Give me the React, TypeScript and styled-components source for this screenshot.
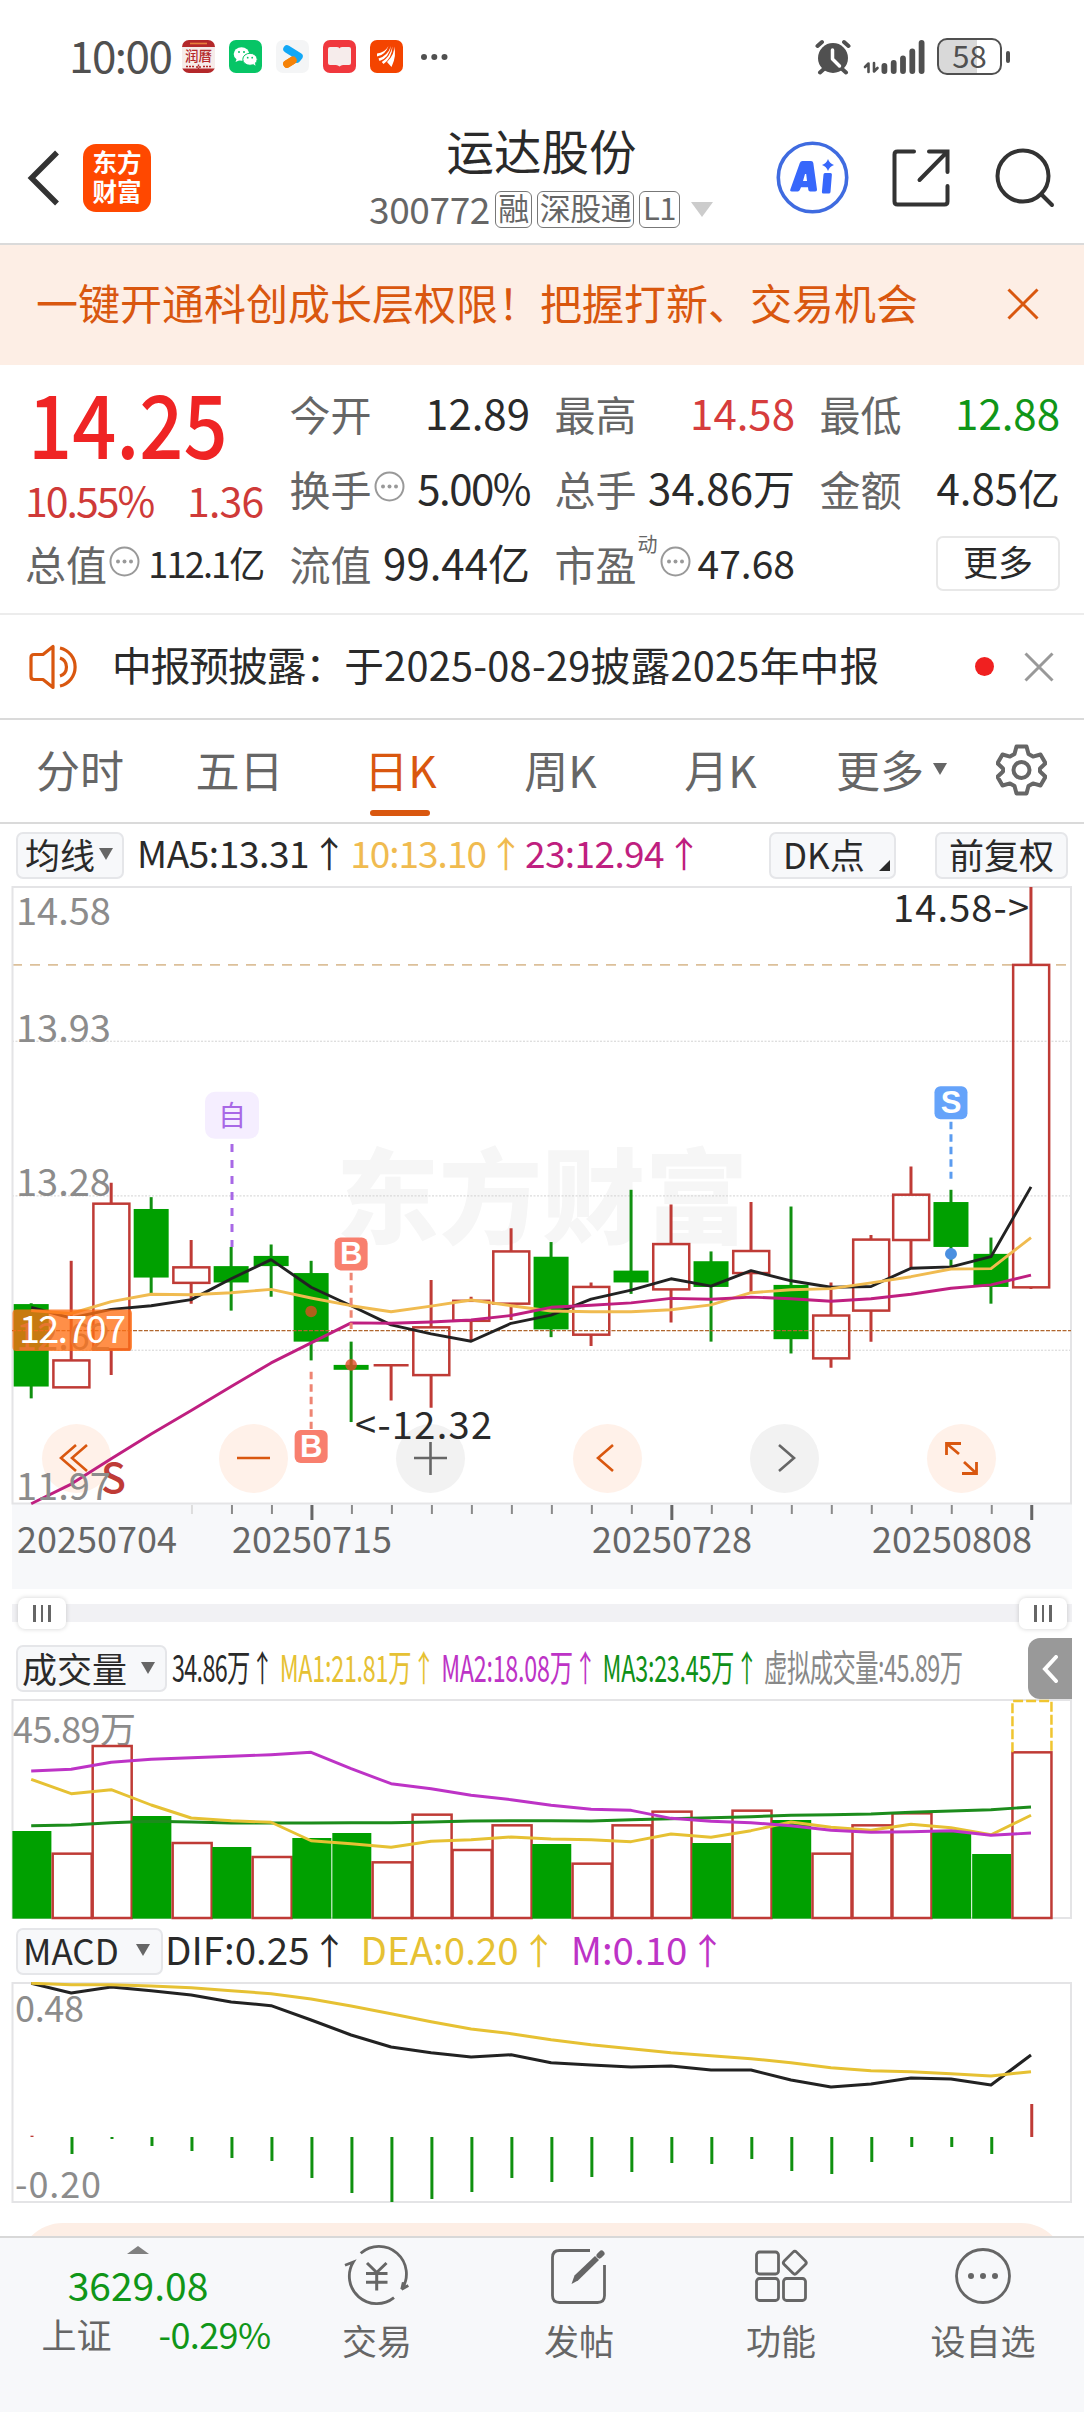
import React from "react";
import styled, { createGlobalStyle } from "styled-components";

const FONT = `"Noto Sans CJK SC", "Noto Sans", sans-serif`;

const C = {
  ink: "#2a2a2a",
  grey: "#666666",
  light: "#8c8c8c",
  orange: "#d9570f",
  peach: "#fdeee5",
  red: "#bf3b36",
  green: "#00a000",
  greenLine: "#109010",
  gold: "#f0bb50",
  yellow: "#e6c133",
  magenta: "#bf1f80",
  purple: "#bd33c6",
  frame: "#e4e4e6",
};

const Global = createGlobalStyle`
  html, body { margin: 0; padding: 0; background: #fff; }
  * { box-sizing: border-box; }
`;

const Page = styled.div`
  width: 1084px;
  height: 2412px;
  overflow: hidden;
  display: flex;
  flex-direction: column;
  background: #fff;
  font-family: ${FONT};
  color: ${C.ink};
  & > * { flex-shrink: 0; }
  svg { display: block; flex-shrink: 0; }
`;

const Text = styled.span<{ $size: number; $color?: string; $ls?: number; $weight?: number; $left?: number }>`
  font-size: ${(p) => p.$size}px;
  color: ${(p) => p.$color ?? C.ink};
  letter-spacing: ${(p) => p.$ls ?? 0}px;
  font-weight: ${(p) => p.$weight ?? 400};
  margin-left: ${(p) => p.$left ?? 0}px;
  line-height: 1.2;
  white-space: nowrap;
`;

const Caret = styled.i<{ $w: number; $h: number; $color: string; $left?: number }>`
  width: 0;
  height: 0;
  margin-left: ${(p) => p.$left ?? 0}px;
  border-left: ${(p) => p.$w / 2}px solid transparent;
  border-right: ${(p) => p.$w / 2}px solid transparent;
  border-top: ${(p) => p.$h}px solid ${(p) => p.$color};
`;

/* ---------- status bar ---------- */
const StatusBar = styled.div`
  height: 113px;
  padding: 0 74px 0 69px;
  display: flex;
  align-items: center;
  justify-content: space-between;
`;
const Row = styled.div<{ $gap?: number }>`
  display: flex;
  align-items: center;
  gap: ${(p) => p.$gap ?? 0}px;
`;
const Clock = styled.span`
  margin-top: -4px;
  font-size: 44px;
  line-height: 53px;
  letter-spacing: -1.5px;
  color: #505050;
`;
const AppIcons = styled.div`
  display: flex;
  align-items: center;
  gap: 14px;
  margin-left: 11px;
`;
const Battery = styled.div`
  width: 65px;
  height: 37px;
  margin-left: 12px;
  padding-bottom: 3px;
  border: 2.5px solid #505050;
  border-radius: 10px;
  display: flex;
  align-items: center;
  justify-content: center;
  background: linear-gradient(90deg, #d9d9d9 62%, #fff 62%);
`;
const BatteryNub = styled.i`
  width: 4px;
  height: 12px;
  border-radius: 2px;
  margin-left: 4px;
  background: #505050;
`;

const AlmanacIcon = () => (
  <svg width="33" height="33" viewBox="0 0 33 33">
    <rect width="33" height="33" rx="7" fill="#b4282a" />
    <rect y="7" width="33" height="21.5" fill="#f6ecea" />
    <path d="M8 3.5h17" stroke="#e8803c" strokeWidth="1.6" />
    <text x="16.5" y="21" fontSize="13.5" fontWeight="500" textAnchor="middle" fill="#b4282a">润曆</text>
    <path d="M4 26.5h8M21 26.5h8M14 27h5M16.5 24.5v5" stroke="#b4282a" strokeWidth="1.4" strokeDasharray="2 1" />
  </svg>
);
const WechatIcon = () => (
  <svg width="33" height="33" viewBox="0 0 33 33">
    <rect width="33" height="33" rx="7" fill="#07c566" />
    <ellipse cx="12.5" cy="14" rx="7.8" ry="6.8" fill="#fff" />
    <path d="M8 18l-1.5 4 4.500-2z" fill="#fff" />
    <ellipse cx="21" cy="19.300" rx="7.200" ry="6" fill="#fff" stroke="#07c566" strokeWidth="1" />
    <path d="M24 24l2.500 1.800-.6-3z" fill="#fff" />
    <g fill="#07c566">
      <circle cx="10" cy="12" r="1" /><circle cx="15" cy="12" r="1" />
      <circle cx="18.700" cy="17.700" r=".9" /><circle cx="23.200" cy="17.700" r=".9" />
    </g>
  </svg>
);
const VideoIcon = () => (
  <svg width="33" height="33" viewBox="0 0 33 33">
    <rect width="33" height="33" rx="7" fill="#f4f5f6" />
    <path d="M11 24L20.500 18" stroke="#f58208" strokeWidth="7.500" strokeLinecap="round" />
    <path d="M11 9L23 16.500L21 19" stroke="#12a8f6" strokeWidth="7.500" strokeLinecap="round" strokeLinejoin="round" fill="none" />
    <path d="M11 24L17 20.300" stroke="#f58208" strokeWidth="7.500" strokeLinecap="round" />
  </svg>
);
const ReaderIcon = () => (
  <svg width="33" height="33" viewBox="0 0 33 33">
    <rect width="33" height="33" rx="7" fill="#f0383e" />
    <path d="M5 9q0-2 2-2h7q2.500 0 2.500 1.500Q16.500 7 19 7h7q2 0 2 2v14q0 2-2 2h-6q-2 0-3.500 1.500Q15 25 13 25H7q-2 0-2-2z" fill="#f6eceb" />
  </svg>
);
const FanIcon = () => (
  <svg width="33" height="33" viewBox="0 0 33 33">
    <rect width="33" height="33" rx="7" fill="#f44400" />
    <g fill="#fff">
      <path d="M7 16.500q8-1 11.500-10.500-4 7-11.500 7.500z" />
      <path d="M9.500 21q9.500-3 11.500-15-3.500 10-12.500 12.500z" />
      <path d="M13.500 24Q22 18 22.500 6.500 20 17 11.800 22z" />
      <path d="M17 22Q25 14 24 6.500q3 9-2.500 20.500z" />
    </g>
  </svg>
);
const DotsSvg = styled.svg`
  margin-left: 3px;
`;
const MoreDots = () => (
  <DotsSvg width="28" height="8" viewBox="0 0 28 8">
    <g fill="#505050"><circle cx="4" cy="4" r="3" /><circle cx="14.300" cy="4" r="3" /><circle cx="24.500" cy="4" r="3" /></g>
  </DotsSvg>
);
const AlarmIcon = () => (
  <svg width="36" height="36" viewBox="0 0 36 36">
    <circle cx="18" cy="19" r="15" fill="#505050" />
    <path d="M2.500 7L7 3M33.500 7L29 3M5 33.500l5-4.500M31 33.500l-5-4.500" stroke="#505050" strokeWidth="4" strokeLinecap="round" />
    <path d="M17.500 11v9l7 7" stroke="#fff" strokeWidth="3.500" strokeLinecap="round" strokeLinejoin="round" fill="none" />
  </svg>
);
const SignalSvg = styled.svg`
  margin-left: 12px;
`;
const SignalIcon = () => (
  <SignalSvg width="62" height="36" viewBox="0 0 62 36">
    <path d="M5.500 33V24.500L2 28M11 24v8.500l3.500-3.500" stroke="#505050" strokeWidth="2.600" strokeLinecap="round" strokeLinejoin="round" fill="none" />
    <g fill="#505050">
      {[11, 14, 18.5, 25.5, 34].map((h, i) => (
        <rect key={i} x={18.5 + i * 9.3} y={35 - h} width="5.800" height={h} rx="2.900" />
      ))}
    </g>
  </SignalSvg>
);

/* ---------- header ---------- */
const Header = styled.div`
  height: 132px;
  padding: 0 29px 1px 27px;
  display: grid;
  grid-template-columns: 1fr auto 1fr;
  align-items: center;
  border-bottom: 2px solid #dadada;
`;
const Logo = styled.div`
  width: 68px;
  height: 68px;
  margin-left: 24px;
  border-radius: 13px;
  background: #ff4800;
  color: #fff;
  font-size: 24.5px;
  font-weight: 700;
  line-height: 29px;
  text-align: center;
  white-space: nowrap;
  padding: 3px 9px 0;
`;
const TitleBox = styled.div`
  display: flex;
  flex-direction: column;
  align-items: center;
  padding-bottom: 4px;
`;
const Title = styled.div`
  padding-left: 1px;
  font-size: 47.5px;
  line-height: 64px;
`;
const SubTitle = styled.div`
  display: flex;
  align-items: center;
  height: 48px;
  margin-top: 4px;
  & > span:first-child { margin-top: -3px; }
`;
const Tag = styled.span<{ $w: number }>`
  width: ${(p) => p.$w}px;
  height: 37px;
  margin-left: 5px;
  border: 1.5px solid #777;
  border-radius: 6px;
  color: ${C.grey};
  font-size: 31px;
  letter-spacing: -0.5px;
  line-height: 30px;
  text-align: center;
  white-space: nowrap;
`;
const HeaderActions = styled.div`
  display: flex;
  align-items: center;
  justify-content: flex-end;
  gap: 45px;
  & > svg:first-child { margin-right: -2px; }
`;

/* ---------- banner ---------- */
const Banner = styled.div`
  height: 120px;
  padding: 0 45px 2px 36px;
  background: ${C.peach};
  display: flex;
  align-items: center;
  justify-content: space-between;
  & > span { margin-top: -3px; }
`;
const Cross = ({ size, color, w }: { size: number; color: string; w: number }) => (
  <svg width={size} height={size} viewBox={`0 0 ${size} ${size}`}>
    <path d={`M1.500 1.500L${size - 1.5} ${size - 1.5}M${size - 1.5} 1.500L1.500 ${size - 1.5}`} stroke={color} strokeWidth={w} />
  </svg>
);

/* ---------- quote ---------- */
const Quote = styled.section`
  height: 250px;
  padding: 4px 26px 0 25px;
  display: flex;
  gap: 26px;
  border-bottom: 2px solid #ececec;
`;
const QuoteMain = styled.div`
  width: 239px;
  display: flex;
  flex-direction: column;
`;
const Price = styled.div`
  height: 103px;
  margin-left: 3px;
  padding-top: 2px;
  line-height: 100px;
  font-size: 88px;
  font-weight: 500;
  color: #ef2424;
  transform: scaleX(0.88);
  transform-origin: left;
`;
const ChangeRow = styled.div`
  height: 53px;
  padding-top: 2px;
  display: flex;
  align-items: center;
  justify-content: space-between;
`;
const QuoteGrid = styled.div`
  flex: 1;
  padding-top: 6px;
  display: grid;
  grid-template-columns: repeat(3, 238.5px);
  column-gap: 26.5px;
  grid-auto-rows: 75px;
  & span { margin-right: -2px; }
`;
const Cell = styled.div`
  height: 75px;
  display: flex;
  align-items: center;
  justify-content: space-between;
`;
const CellLabel = styled.div`
  display: flex;
  align-items: center;
  font-size: 41px;
  line-height: 50px;
  color: ${C.grey};
  white-space: nowrap;
`;
const Sup = styled.sup`
  font-size: 20px;
  line-height: 24px;
  align-self: flex-start;
  margin: -6px 0 0 1px;
`;
const MoreButton = styled.button`
  width: 124px;
  height: 55px;
  margin: 2px -2px 0 auto;
  padding: 0 0 6px;
  border: 2px solid #e8e8e8;
  border-radius: 7px;
  background: #fff;
  font: 400 35px ${FONT};
  color: ${C.ink};
  line-height: 44px;
`;
const InfoSvg = styled.svg<{ $left: number }>`
  margin: -3px 0 0 ${(p) => p.$left}px;
`;
const InfoDot = ({ left = 2 }: { left?: number }) => (
  <InfoSvg width="31" height="31" viewBox="0 0 31 31" $left={left}>
    <circle cx="15.500" cy="15.500" r="14" fill="none" stroke="#999" strokeWidth="2" />
    <g fill="#999"><circle cx="9" cy="15.500" r="2" /><circle cx="15.500" cy="15.500" r="2" /><circle cx="22" cy="15.500" r="2" /></g>
  </InfoSvg>
);

/* ---------- notice ---------- */
const Notice = styled.div`
  height: 105px;
  padding: 0 30px 0 29px;
  display: flex;
  align-items: center;
  border-bottom: 2px solid #dadada;
  & > span { margin-top: -6px; }
`;
const RedDot = styled.i`
  width: 19px;
  height: 19px;
  margin: 0 30px 0 auto;
  border-radius: 50%;
  background: #f02020;
`;

/* ---------- tabs ---------- */
const Tabs = styled.nav`
  height: 104px;
  padding: 0 36px;
  display: flex;
  border-bottom: 2px solid #dadada;
`;
const Tab = styled.div<{ $w: number; $active?: boolean }>`
  width: ${(p) => p.$w}px;
  height: 97px;
  display: flex;
  align-items: center;
  position: relative;
  font-size: 44px;
  line-height: 94px;
  color: ${(p) => (p.$active ? C.orange : C.grey)};
  &::after {
    content: "";
    display: ${(p) => (p.$active ? "block" : "none")};
    position: absolute;
    left: 6px;
    bottom: 1px;
    width: 60px;
    height: 6px;
    border-radius: 3px;
    background: ${C.orange};
  }
`;

/* ---------- indicator headers ---------- */
const IndicatorBar = styled.div<{ $h: number }>`
  height: ${(p) => p.$h}px;
  padding: 0 16px;
  display: flex;
  align-items: center;
`;
const Chip = styled.button<{ $w: number; $left?: string; $pad?: number }>`
  width: ${(p) => p.$w}px;
  height: 47px;
  margin: 0 0 0 ${(p) => p.$left ?? "0"};
  padding: 0 0 2px ${(p) => p.$pad ?? 7}px;
  display: flex;
  flex-shrink: 0;
  align-items: center;
  position: relative;
  border: 2px solid #e5e6e9;
  border-radius: 7px;
  background: #f7f8fa;
  font: 400 35px/40px ${FONT};
  color: ${C.ink};
  white-space: nowrap;
`;
const Corner = styled.i`
  position: absolute;
  right: 4px;
  bottom: 6px;
  border-left: 11px solid transparent;
  border-bottom: 11px solid ${C.ink};
`;
const Arrow = styled.span`
  display: inline-block;
  width: 36px;
  margin-left: 2px;
  text-align: center;
  font-size: 36px;
  letter-spacing: 0;
`;
const Reading = styled(Text)`
  margin-top: -5px;
`;
const Condensed = styled.div`
  display: flex;
  flex: none;
  width: 0;
  gap: 9.5px;
  margin-left: 5px;
  transform: scaleX(0.63);
  transform-origin: left;
`;
const CollapseTab = styled.div`
  width: 44px;
  height: 61px;
  margin: 0 -4px 0 auto;
  border-radius: 12px 0 0 12px;
  background: #999;
  display: flex;
  align-items: center;
  justify-content: center;
  flex-shrink: 0;
`;

const Value = ({ children, color, size = 37, ls = -0.4, left = 0 }: { children: string; color: string; size?: number; ls?: number; left?: number }) => (
  <Reading $size={size} $color={color} $ls={ls} $left={left}>{children}<Arrow>↑</Arrow></Reading>
);

/* ---------- K-line chart ---------- */
type Candle = [up: 0 | 1, high: number, top: number, bottom: number, low: number];
const candles: Candle[] = [
  [0, 1037, 1039, 1241, 1270], [1, 933, 1177, 1243, 1243], [1, 742, 793, 1150, 1213], [0, 777, 806, 974, 1012],
  [1, 882, 949, 987, 1038], [0, 899, 946, 986, 1055], [0, 893, 921, 946, 1021], [0, 933, 963, 1131, 1177],
  [0, 1131, 1188, 1200, 1328], [1, 1186, 1189, 1189, 1275], [1, 980, 1096, 1213, 1293], [1, 1021, 1031, 1080, 1130],
  [1, 853, 910, 1038, 1078], [0, 887, 923, 1101, 1120], [1, 986, 997, 1114, 1142], [0, 759, 957, 986, 1014],
  [1, 795, 892, 1003, 1084], [0, 910, 934, 997, 1131], [1, 789, 909, 963, 1010], [0, 800, 992, 1125, 1160],
  [1, 986, 1067, 1172, 1195], [1, 870, 881, 1055, 1131], [1, 702, 771, 882, 952], [0, 759, 789, 899, 952],
  [0, 876, 916, 997, 1038], [1, 17, 208, 998, 1002],
];
const ma5 = [1047, 1073, 1052, 1043, 1028, 977, 930, 998, 1043, 1090, 1112, 1130, 1086, 1066, 1027, 1005, 977, 995, 957, 982, 998, 996, 951, 948, 923, 752];
const ma10 = [1055, 1062, 1033, 1015, 1016, 1011, 1003, 1024, 1043, 1058, 1044, 1029, 1043, 1056, 1058, 1058, 1053, 1041, 1011, 1004, 1001, 987, 972, 953, 952, 876];
const ma23 = [1528, 1480, 1418, 1357, 1300, 1241, 1183, 1134, 1085, 1086, 1083, 1078, 1067, 1047, 1042, 1036, 1025, 1027, 1022, 1026, 1032, 1026, 1015, 1000, 992, 968];

const cx = (i: number) => 31.2 + 39.99 * i;
const ky = (v: number) => v / 2.45 - 6;
const line = (values: number[], y: (v: number) => number) => values.map((v, i) => `${cx(i).toFixed(1)},${y(v).toFixed(1)}`).join(" ");

const KWrap = styled.div`
  position: relative;
  height: 703px;
`;
const KSvg = styled.svg`
  position: relative;
  pointer-events: none;
`;
const ToolRow = styled.div`
  position: absolute;
  left: 42px;
  top: 538px;
  display: flex;
  gap: 108px;
`;
const Tool = styled.button<{ $grey?: boolean }>`
  width: 69px;
  height: 69px;
  padding: 0;
  border: 0;
  border-radius: 50%;
  display: flex;
  align-items: center;
  justify-content: center;
  color: ${(p) => (p.$grey ? C.grey : C.orange)};
  background: ${(p) => (p.$grey ? "#f2f2f2" : "#fff1e9")};
`;
const toolPaths = [
  { d: "M17 4L2 17l15 13M28 4L13 17l15 13", grey: false },
  { d: "M1 17h33", grey: false },
  { d: "M1 17h33M17.500 1v33", grey: true },
  { d: "M23 4L8 17l15 13", grey: false },
  { d: "M12 4l15 13-15 13", grey: true },
];

const Badge = ({ x, y, t, color }: { x: number; y: number; t: string; color: string }) => (
  <g>
    <rect x={x - 16.5} y={y - 16.5} width="33" height="33" rx="6" fill={color} />
    <text x={x} y={y + 10.5} fontSize="31" fontWeight="700" fill="#fff" textAnchor="middle" fontFamily="Liberation Sans, sans-serif">{t}</text>
  </g>
);

const KChart = () => (
  <KWrap>
    <ToolRow>
      {toolPaths.map((t, i) => (
        <Tool key={i} $grey={t.grey}>
          <svg width="35" height="35" viewBox="0 0 35 35" fill="none" stroke="currentColor" strokeWidth="2.600"><path d={t.d} /></svg>
        </Tool>
      ))}
      <Tool>
        <svg width="35" height="35" viewBox="0 0 35 35" fill="none" stroke="currentColor" strokeWidth="2.800">
          <path d="M2.500 14V2.500H17M2.500 2.500L15 13M32.500 21v11.500H18M32.500 32.500L20 21" />
        </svg>
      </Tool>
    </ToolRow>
    <KSvg width="1084" height="703" viewBox="0 0 1084 703">
      <rect x="12" y="618" width="1060" height="85" fill="#f7f8fa" />
      <text x="542" y="350" fontSize="103" fontWeight="900" fill="#f6f6f6" textAnchor="middle">东方财富</text>
      {[395, 774, 1152].map((v) => (
        <path key={v} d={`M12 ${ky(v)}H1071`} stroke="#d2d2d2" strokeDasharray="2 1.500" />
      ))}
      <path d={`M12 ${ky(208)}H1071`} stroke="#dcc09a" strokeWidth="1.600" strokeDasharray="10 8" />
      <rect x="12.500" y="1" width="1058.500" height="616.500" fill="none" stroke={C.frame} strokeWidth="2" />
      {candles.map(([up, h, t, b, l], i) => {
        const x = cx(i);
        const col = up ? C.red : C.greenLine;
        if (up)
          return (
            <g key={i} stroke={col} strokeWidth="2.500" fill="none">
              <path d={`M${x} ${ky(h)}V${ky(t)}M${x} ${ky(b)}V${ky(l)}`} strokeWidth="3" />
              {b - t < 2 ? <path d={`M${x - 17.5} ${ky(t)}h35`} /> : <rect x={x - 17.8} y={ky(t)} width="36" height={ky(b) - ky(t)} />}
            </g>
          );
        return (
          <g key={i}>
            <path d={`M${x} ${ky(h)}V${ky(l)}`} stroke={col} strokeWidth="3" />
            <rect x={x - 17.5} y={ky(t)} width="35" height={ky(b) - ky(t)} fill={C.green} />
          </g>
        );
      })}
      <path d={`M12 ${ky(1104)}H1071`} stroke="#b0662e" strokeWidth="1.200" strokeDasharray="4 1.500" />
      <g fill="none" strokeWidth="2.900" strokeLinejoin="round">
        <polyline points={line(ma5, ky)} stroke="#222" />
        <polyline points={line(ma10, ky)} stroke={C.gold} />
        <polyline points={line(ma23, ky)} stroke={C.magenta} />
      </g>
      <g fill="rgba(205,85,30,.85)">
        <circle cx={cx(7)} cy={ky(1057)} r="5.800" />
        <circle cx={cx(8)} cy={ky(1188)} r="5.800" fill="rgba(225,75,40,.8)" />
      </g>
      <circle cx={cx(23)} cy={ky(916)} r="6" fill="#4a8fe0" />
      <g fill="none" strokeWidth="3">
        <path d={`M232 ${ky(647)}V${ky(899)}`} stroke="#a868e6" strokeDasharray="8 8" />
        <path d={`M${cx(8)} ${ky(962)}V${ky(1100)}`} stroke="#ee8573" strokeDasharray="7.500 5" />
        <path d={`M${cx(7)} ${ky(1205)}V${ky(1345)}`} stroke="#ee8573" strokeDasharray="7.500 5" />
        <path d={`M${cx(23)} ${ky(592)}V${ky(732)}`} stroke="#5b9cf0" strokeDasharray="7.500 5" />
      </g>
      <rect x="205" y={ky(519)} width="54" height="47" rx="10" fill="#f5eeff" />
      <text x="232" y={ky(602)} fontSize="28" fill="#a868e6" textAnchor="middle">自</text>
      <Badge x={cx(8)} y={ky(916)} t="B" color="#f87f6e" />
      <Badge x={cx(7)} y={ky(1388)} t="B" color="#f87f6e" />
      <Badge x={cx(23)} y={ky(546)} t="S" color="#65a3fa" />
      <text x="101" y={ky(1501)} fontSize="41" fill={C.red} fontWeight="500">S</text>
      <g fontSize="38" fill={C.light}>
        <text x="16" y={ky(109)}>14.58</text>
        <text x="16" y={ky(396)}>13.93</text>
        <text x="16" y={ky(773)}>13.28</text>
        <text x="16" y={ky(1152)}>12.62</text>
        <text x="16" y={ky(1520)}>11.97</text>
      </g>
      <rect x="12.500" y={ky(1052)} width="119.500" height="41.500" rx="4" fill="rgba(255,112,20,.78)" />
      <text x="19" y={ky(1134)} fontSize="38" fill="#fff" textLength="107">12.707</text>
      <g fontSize="38" fill={C.ink}>
        <text x="893" y={ky(104)} textLength="136">14.58-&gt;</text>
        <text x="355" y={ky(1370)} textLength="137">&lt;-12.32</text>
      </g>
      {Array.from({ length: 22 }, (_, k) => k + 4).map((i) => {
        const major = i === 7 || i === 16 || i === 25;
        return <path key={i} d={`M${cx(i) + 0.8} 619V${major ? 634 : 628}`} stroke={i === 4 ? "#ddd" : major ? C.grey : "#8a8a8a"} strokeWidth={major ? 3 : 2} />;
      })}
      <g fontSize="36" fill={C.grey}>
        <text x="17" y="667" textLength="160">20250704</text>
        <text x="232" y="667" textLength="160">20250715</text>
        <text x="592" y="667" textLength="160">20250728</text>
        <text x="872" y="667" textLength="160">20250808</text>
      </g>
    </KSvg>
  </KWrap>
);

/* ---------- range slider ---------- */
const Slider = styled.div`
  height: 49px;
  padding: 0 17px 0 18px;
  display: flex;
  align-items: center;
  justify-content: space-between;
  background: linear-gradient(#f1f1f4, #f1f1f4) center 15px / 1060px 18px no-repeat;
`;
const Handle = styled.div`
  width: 48px;
  height: 31px;
  border-radius: 7px;
  background: #fff;
  box-shadow: 0 0 5px rgba(0, 0, 0, 0.18);
  display: flex;
  align-items: center;
  justify-content: center;
  gap: 5px;
  & > i { width: 2.5px; height: 17px; background: ${C.grey}; }
`;

/* ---------- volume ---------- */
const volumes: [0 | 1, number][] = [
  [0, 423], [1, 491], [1, 168], [0, 378], [1, 459], [0, 471], [1, 501], [0, 444], [0, 429], [1, 517], [1, 374], [1, 480], [1, 406],
  [0, 462], [1, 521], [1, 406], [1, 365], [0, 459], [1, 362], [0, 390], [1, 491], [1, 406], [1, 370], [0, 423], [0, 492], [1, 187],
];
const vma1 = [268, 311, 299, 345, 384, 392, 397, 452, 461, 472, 454, 449, 441, 447, 449, 455, 432, 442, 422, 396, 412, 421, 403, 413, 434, 376];
const vma2 = [243, 238, 217, 208, 203, 199, 194, 187, 236, 281, 296, 316, 329, 346, 358, 361, 385, 394, 398, 407, 421, 427, 425, 422, 436, 429];
const vma3 = [407, 405, 398, 394, 396, 399, 399, 399, 398, 398, 396, 393, 392, 392, 393, 389, 386, 383, 380, 376, 374, 372, 367, 363, 359, 351];
const vy = (v: number) => (v - 27) / 3;

const VolumeChart = () => (
  <svg width="1084" height="221" viewBox="0 0 1084 221">
    <rect x="12.500" y="1" width="1058.500" height="218" fill="none" stroke={C.frame} strokeWidth="2" />
    <text x="13" y="44" fontSize="36" fill={C.light} textLength="123">45.89万</text>
    {volumes.map(([up, v], i) =>
      up ? (
        <rect key={i} x={cx(i) - 18.5} y={vy(v)} width="39" height={vy(684) - vy(v)} fill="none" stroke={C.red} strokeWidth="2.500" />
      ) : (
        <rect key={i} x={cx(i) - 18.8} y={vy(v)} width="39" height={vy(686) - vy(v)} fill={C.green} />
      ),
    )}
    <path d={`M${cx(25) - 18.5} ${vy(187)}V2h39V${vy(187)}`} fill="none" stroke="#f0c530" strokeWidth="2.500" strokeDasharray="10 3" />
    <g fill="none" strokeWidth="2.900" strokeLinejoin="round">
      <polyline points={line(vma3, vy)} stroke="#1c8c1c" />
      <polyline points={line(vma1, vy)} stroke={C.yellow} />
      <polyline points={line(vma2, vy)} stroke={C.purple} />
    </g>
  </svg>
);

/* ---------- MACD ---------- */
const dif = [40, 69, 51, 62, 75, 96, 107, 150, 195, 231, 248, 261, 254, 278, 285, 291, 288, 300, 300, 330, 351, 342, 324, 327, 345, 255];
const dea = [40, 44, 44, 48, 53, 62, 71, 87, 108, 131, 155, 177, 191, 209, 224, 236, 248, 257, 266, 278, 293, 302, 305, 311, 318, 305];
const hist = [497, 552, 507, 528, 543, 564, 573, 624, 669, 696, 687, 666, 624, 636, 621, 606, 579, 582, 567, 603, 612, 576, 531, 531, 552, 402];
const my = (v: number) => (v - 36) / 3;

const MacdChart = () => (
  <svg width="1084" height="221" viewBox="0 0 1084 221">
    <rect x="12.500" y="1" width="1058.500" height="219" fill="none" stroke={C.frame} strokeWidth="2" />
    <g fontSize="36" fill={C.light}>
      <text x="15" y={my(156)} textLength="69">0.48</text>
      <text x="15" y={my(684)} textLength="86">-0.20</text>
    </g>
    {hist.map((v, i) => (
      <path key={i} d={`M${cx(i) + 0.8} ${my(501)}V${my(v)}`} stroke={v < 501 ? C.red : C.greenLine} strokeWidth="3" />
    ))}
    <g fill="none" strokeWidth="3" strokeLinejoin="round">
      <polyline points={line(dif, my)} stroke="#222" />
      <polyline points={line(dea, my)} stroke={C.yellow} />
    </g>
  </svg>
);

const CardPeek = styled.div`
  height: 13px;
  margin: 20px 18px 0;
  overflow: hidden;
  &::before {
    content: "";
    display: block;
    height: 90px;
    border-radius: 45px;
    background: ${C.peach};
  }
`;

/* ---------- bottom bar ---------- */
const BottomBar = styled.footer`
  flex: 1 0 auto;
  display: flex;
  background: #f7f8fa;
  border-top: 2px solid #d8d8d8;
`;
const IndexCell = styled.div`
  width: 276px;
  display: flex;
  flex-direction: column;
  align-items: center;
`;
const UpMark = styled.i`
  margin-top: 8px;
  margin-bottom: 7px;
  border-left: 11px solid transparent;
  border-right: 11px solid transparent;
  border-bottom: 8px solid #808080;
`;
const IndexRow = styled.div`
  width: 229px;
  height: 48px;
  margin: 2px 0 0 36px;
  display: flex;
  align-items: center;
  justify-content: space-between;
`;
const NavItem = styled.div`
  width: 202px;
  height: 130px;
  padding-top: 7px;
  display: flex;
  flex-direction: column;
  align-items: center;
  gap: 11px;
  font-size: 35px;
  line-height: 44px;
  color: ${C.grey};
`;
const NavSvg = ({ children }: { children: React.ReactNode }) => (
  <svg width="66" height="62" viewBox="0 0 66 62" fill="none" stroke={C.grey} strokeWidth="2.800">{children}</svg>
);

const ChipLabel = styled.span`
  margin-left: 5px;
`;

export default function App() {
  return (
    <Page>
      <Global />
      <StatusBar>
        <Row>
          <Clock>10:00</Clock>
          <AppIcons>
            <AlmanacIcon /><WechatIcon /><VideoIcon /><ReaderIcon /><FanIcon /><MoreDots />
          </AppIcons>
        </Row>
        <Row>
          <AlarmIcon />
          <SignalIcon />
          <Battery><Text $size={31} $color="#505050">58</Text></Battery>
          <BatteryNub />
        </Row>
      </StatusBar>

      <Header>
        <Row>
          <svg width="32" height="56" viewBox="0 0 32 56"><path d="M30 2.500L4.500 28 30 53.500" fill="none" stroke="#333" strokeWidth="5.500" /></svg>
          <Logo>东方<br />财富</Logo>
        </Row>
        <TitleBox>
          <Title>运达股份</Title>
          <SubTitle>
            <Text $size={37} $color={C.grey} $ls={-0.4}>300772</Text>
            <Tag $w={37}>融</Tag>
            <Tag $w={97}>深股通</Tag>
            <Tag $w={41}>L1</Tag>
            <Caret $w={22} $h={15} $color="#ccc" $left={11} />
          </SubTitle>
        </TitleBox>
        <HeaderActions>
          <svg width="73" height="73" viewBox="0 0 73 73">
            <circle cx="36.500" cy="36.500" r="34.200" fill="none" stroke="#3f6be0" strokeWidth="3.600" />
            <path d="M26.500 20h8.500q2 0 2.300 2L41 48.500q.2 2-1.800 2h-5q-1.700 0-1.900-1.700l-.3-2.500h-7l-1.200 2.800q-.6 1.400-2 1.400h-6q-2.200 0-1.400-2.200L23.800 22q.8-2 2.700-2zm2.500 13-2 7h4l-.8-7z" fill="#3767fb" fillRule="evenodd" />
            <path d="M49 32h5.500q1.500 0 1.400 1.500L54.500 51q-.2 1.500-1.700 1.500h-5.500q-1.500 0-1.400-1.500L47.500 33.500q.1-1.500 1.500-1.500zM52 18q1.500 4.500 6 6-4.500 1.500-6 6-1.500-4.500-6-6 4.500-1.500 6-6z" fill="#3767fb" />
          </svg>
          <svg width="58" height="58" viewBox="0 0 58 58" fill="none" stroke="#333" strokeWidth="4" strokeLinecap="round">
            <path d="M22 2.500H5.500q-3 0-3 3v47q0 3 3 3h47q3 0 3-3V37M37 2.500h18.500V23M55 3L27.500 31" />
          </svg>
          <svg width="60" height="60" viewBox="0 0 60 60" fill="none" stroke="#333" strokeWidth="4" strokeLinecap="round">
            <circle cx="28" cy="28" r="25.500" /><path d="M46.500 46.500L57 57" />
          </svg>
        </HeaderActions>
      </Header>

      <Banner>
        <Text $size={42} $color={C.orange}>一键开通科创成长层权限！把握打新、交易机会</Text>
        <Cross size={32} color={C.orange} w={3} />
      </Banner>

      <Quote>
        <QuoteMain>
          <Price>14.25</Price>
          <ChangeRow>
            <Text $size={41} $color="#cf3a38" $ls={-2}>10.55%</Text>
            <Text $size={41} $color="#cf3a38" $ls={-0.8}>1.36</Text>
          </ChangeRow>
          <Cell>
            <CellLabel>总值<InfoDot /></CellLabel>
            <Text $size={36} $ls={-1.8}>112.1亿</Text>
          </Cell>
        </QuoteMain>
        <QuoteGrid>
          <Cell><CellLabel>今开</CellLabel><Text $size={42}>12.89</Text></Cell>
          <Cell><CellLabel>最高</CellLabel><Text $size={42} $color="#d63c3c">14.58</Text></Cell>
          <Cell><CellLabel>最低</CellLabel><Text $size={42} $color="#109618">12.88</Text></Cell>
          <Cell><CellLabel>换手<InfoDot /></CellLabel><Text $size={42} $ls={-1.5}>5.00%</Text></Cell>
          <Cell><CellLabel>总手</CellLabel><Text $size={42}>34.86万</Text></Cell>
          <Cell><CellLabel>金额</CellLabel><Text $size={42}>4.85亿</Text></Cell>
          <Cell><CellLabel>流值</CellLabel><Text $size={42}>99.44亿</Text></Cell>
          <Cell><CellLabel>市盈<Sup>动</Sup><InfoDot /></CellLabel><Text $size={39}>47.68</Text></Cell>
          <Cell><MoreButton>更多</MoreButton></Cell>
        </QuoteGrid>
      </Quote>

      <Notice>
        <svg width="52" height="46" viewBox="0 0 52 46" fill="none" stroke={C.orange} strokeWidth="3.200">
          <path d="M24 2.500v41L14 35.500H5q-3 0-3-3v-19q0-3 3-3h9z" strokeLinejoin="round" />
          <path d="M31 14a9.500 9.500 0 0 1 0 18M31 4a19.500 19.500 0 0 1 0 38" />
        </svg>
        <Text $size={39.7} $left={31} $ls={-1}>中报预披露：</Text>
        <Text $size={39.7} $ls={0.27}>于2025-08-29披露2025年中报</Text>
        <RedDot />
        <Cross size={30} color="#999" w={3} />
      </Notice>

      <Tabs>
        <Tab $w={159.5}>分时</Tab>
        <Tab $w={169}>五日</Tab>
        <Tab $w={160} $active>日K</Tab>
        <Tab $w={160}>周K</Tab>
        <Tab $w={152}>月K</Tab>
        <Tab $w={160}>更多<Caret $w={15} $h={12} $color={C.grey} $left={9} /></Tab>
        <Tab $w={52}>
          <svg width="51" height="54" viewBox="0 -2 51 54" fill="none" stroke={C.grey} strokeWidth="4" strokeLinejoin="round">
            <path d="M20.500 2.500h10l2 7.500 4.500 2.600 7.500-2.100 5 8.700-5.500 5.300v3l5.500 5.300-5 8.700-7.500-2.100-4.500 2.600-2 7.500h-10l-2-7.500-4.500-2.600-7.500 2.100-5-8.700L7 27.500v-3l-5.500-5.300 5-8.700 7.500 2.100 4.500-2.600z" />
            <circle cx="25.500" cy="26" r="8" />
          </svg>
        </Tab>
      </Tabs>

      <IndicatorBar $h={62}>
        <Chip $w={108}>均线<Caret $w={14} $h={12} $color={C.grey} $left={4} /></Chip>
        <Value color={C.ink} left={13}>MA5:13.31</Value>
        <Value color={C.gold} left={3} ls={-1}>10:13.10</Value>
        <Value color={C.magenta} left={1} ls={-0.6}>23:12.94</Value>
        <Chip $w={127} $left="auto">
          <ChipLabel>DK点</ChipLabel><Corner />
        </Chip>
        <Chip $w={133} $left="39px"><ChipLabel>前复权</ChipLabel></Chip>
      </IndicatorBar>
      <KChart />

      <Slider>
        <Handle><i /><i /><i /></Handle>
        <Handle><i /><i /><i /></Handle>
      </Slider>

      <IndicatorBar $h={61}>
        <Chip $w={151} $pad={4}>成交量<Caret $w={15} $h={12} $color={C.grey} $left={14} /></Chip>
        <Condensed>
          <Value color={C.ink} ls={-1}>34.86万</Value>
          <Value color={C.yellow}>MA1:21.81万</Value>
          <Value color={C.purple}>MA2:18.08万</Value>
          <Value color="#109018">MA3:23.45万</Value>
          <Reading $size={37} $color="#888" $ls={-0.8}>虚拟成交量:45.89万</Reading>
        </Condensed>
        <CollapseTab>
          <svg width="16" height="28" viewBox="0 0 16 28"><path d="M14 2L3 14l11 12" fill="none" stroke="#fff" strokeWidth="4" strokeLinecap="round" /></svg>
        </CollapseTab>
      </IndicatorBar>
      <VolumeChart />

      <IndicatorBar $h={62}>
        <Chip $w={147} $pad={5}>MACD<Caret $w={14} $h={12} $color={C.grey} $left={17} /></Chip>
        <Value color={C.ink} size={38.5} ls={0} left={2}>DIF:0.25</Value>
        <Value color={C.yellow} size={38.5} ls={0} left={13}>DEA:0.20</Value>
        <Value color={C.purple} size={38.5} ls={0} left={14}>M:0.10</Value>
      </IndicatorBar>
      <MacdChart />
      <CardPeek />

      <BottomBar>
        <IndexCell>
          <UpMark />
          <Text $size={39} $color="#109618">3629.08</Text>
          <IndexRow>
            <Text $size={35} $color={C.grey}>上证</Text>
            <Text $size={36} $color="#109618" $ls={-0.6}>-0.29%</Text>
          </IndexRow>
        </IndexCell>
        <NavItem>
          <NavSvg>
            <path d="M16.700 8.300A27.500 27.500 0 0 1 57.700 44.300L64.300 40.500M57.700 44.300l1.600-7M50 52.700A27.500 27.500 0 0 1 9.300 17L1 20.300" />
            <path d="M23 18l9.700 9.500L42.500 18M32.700 27.500V45.500M22 28.500h21.500M22 37.300h21.500" strokeWidth="3" />
          </NavSvg>
          交易
        </NavItem>
        <NavItem>
          <NavSvg>
            <path d="M44 5.500H13.500q-7 0-7 7v38q0 7 7 7h38q7 0 7-7V20" />
            <path d="M25.500 39l3-8.500L49 11l4 4-21 20.500z" fill={C.grey} stroke="none" />
            <path d="M53.500 10.500l2-2" strokeWidth="6" strokeLinecap="round" />
          </NavSvg>
          发帖
        </NavItem>
        <NavItem>
          <NavSvg>
            <rect x="8.500" y="7" width="22" height="22" rx="3" />
            <rect x="8.500" y="33.500" width="22" height="22" rx="3" />
            <rect x="35.500" y="33.500" width="22" height="22" rx="3" />
            <rect x="38" y="9" width="17.500" height="17.500" rx="2.500" transform="rotate(45 46.800 17.800)" />
          </NavSvg>
          功能
        </NavItem>
        <NavItem>
          <NavSvg>
            <circle cx="33" cy="31" r="26.500" />
            <g fill={C.grey} stroke="none"><circle cx="21" cy="31" r="3" /><circle cx="33" cy="31" r="3" /><circle cx="45" cy="31" r="3" /></g>
          </NavSvg>
          设自选
        </NavItem>
      </BottomBar>
    </Page>
  );
}
